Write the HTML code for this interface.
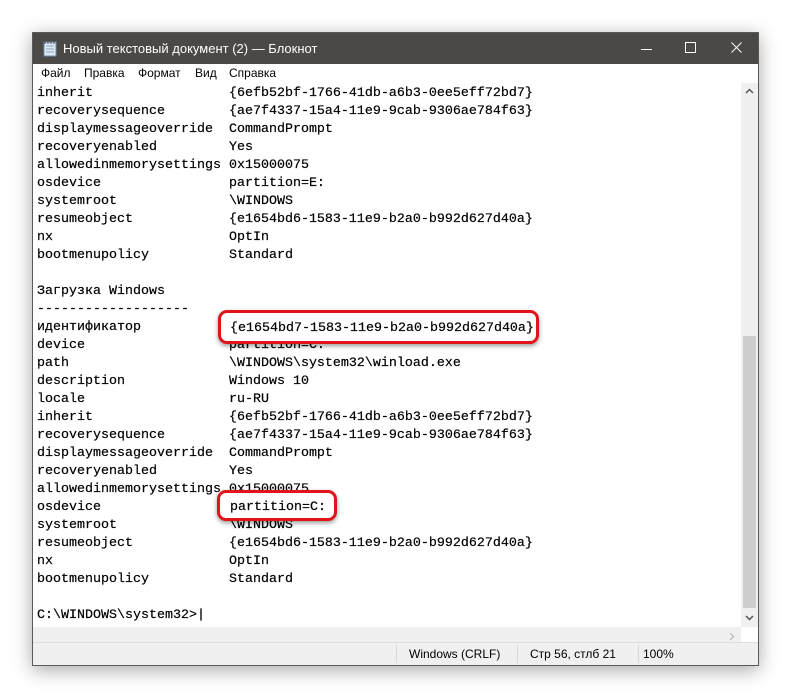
<!DOCTYPE html>
<html><head><meta charset="utf-8"><style>
body{margin:0;width:792px;height:699px;background:#fff;position:relative;overflow:hidden;font-family:"Liberation Sans",sans-serif}
.win{position:absolute;left:32px;top:32px;width:727px;height:634px;background:#fff;border:1px solid #5a5a5a;box-sizing:border-box;box-shadow:0 4px 18px rgba(0,0,0,.35)}
.title{position:absolute;left:0;top:0;right:0;height:31px;background:#4b4946;color:#fff;font-size:13px;line-height:31px}
.title span{position:absolute;left:30px}
.menu{position:absolute;left:0;top:31px;right:0;height:19px;font-size:12px;line-height:19px;color:#000}
.menu span{position:absolute}
pre{position:absolute;left:4px;top:52px;margin:0;font-family:"Liberation Mono",monospace;font-size:13.33px;line-height:18px;color:#000;-webkit-text-stroke:0.2px #000}
.vs{position:absolute;right:0;top:50px;width:17px;height:544px;background:#f0f0f0}
.thumb{position:absolute;left:2px;width:13px;top:253px;height:272px;background:#cdcdcd}
.hs{position:absolute;left:0;right:17px;top:594px;height:18px;background:#f0f0f0}
.status{position:absolute;left:0;right:0;bottom:0;height:22px;background:#f0f0f0;border-top:1px solid #ddd;font-size:12px;line-height:22px;color:#000}
.status span{position:absolute}
.sep{position:absolute;top:2px;width:1px;height:18px;background:#d8d8d8}
.box{position:absolute;border:3px solid #e0141b;border-radius:9px;background:#fff;box-shadow:0 2px 5px rgba(0,0,0,.4),inset 0 0 0 1px #fff;font-family:"Liberation Mono",monospace;font-size:13.33px;line-height:18px;color:#000;-webkit-text-stroke:0.2px #000;box-sizing:border-box}
</style></head><body>
<div class="win">
<div class="title">
<svg style="position:absolute;left:9px;top:7px" width="16" height="17"><rect x="2" y="2" width="12" height="14" fill="#dfe9f5" stroke="#6f8aa8"/><path d="M4 6h8M4 9h8M4 12h8" stroke="#8aa2bf"/><path d="M3 1v3M6 1v3M9 1v3M12 1v3" stroke="#444"/></svg>
<span>Новый текстовый документ (2) — Блокнот</span>
<svg style="position:absolute;left:608px;top:10px" width="12" height="12"><path d="M0 6.5h11" stroke="#fff"/></svg>
<svg style="position:absolute;left:652px;top:9px" width="12" height="12"><rect x="0.5" y="0.5" width="10" height="10" fill="none" stroke="#fff"/></svg>
<svg style="position:absolute;left:698px;top:9px" width="12" height="12"><path d="M0.5 0.5l10 10M10.5 0.5l-10 10" stroke="#fff"/></svg>
</div>
<div class="menu"><span style="left:8px">Файл</span><span style="left:51px">Правка</span><span style="left:105px">Формат</span><span style="left:162px">Вид</span><span style="left:196px">Справка</span></div>
<pre>inherit                 {6efb52bf-1766-41db-a6b3-0ee5eff72bd7}
recoverysequence        {ae7f4337-15a4-11e9-9cab-9306ae784f63}
displaymessageoverride  CommandPrompt
recoveryenabled         Yes
allowedinmemorysettings 0x15000075
osdevice                partition=E:
systemroot              \WINDOWS
resumeobject            {e1654bd6-1583-11e9-b2a0-b992d627d40a}
nx                      OptIn
bootmenupolicy          Standard

Загрузка Windows
-------------------
идентификатор           {e1654bd7-1583-11e9-b2a0-b992d627d40a}
device                  partition=C:
path                    \WINDOWS\system32\winload.exe
description             Windows 10
locale                  ru-RU
inherit                 {6efb52bf-1766-41db-a6b3-0ee5eff72bd7}
recoverysequence        {ae7f4337-15a4-11e9-9cab-9306ae784f63}
displaymessageoverride  CommandPrompt
recoveryenabled         Yes
allowedinmemorysettings 0x15000075
osdevice                partition=C:
systemroot              \WINDOWS
resumeobject            {e1654bd6-1583-11e9-b2a0-b992d627d40a}
nx                      OptIn
bootmenupolicy          Standard

C:\WINDOWS\system32>|</pre>
<div class="vs"><div class="thumb"></div>
<svg style="position:absolute;left:4px;top:5px" width="9" height="6"><path d="M1 5l3.5-3.5L8 5" stroke="#555" stroke-width="1.5" fill="none"/></svg>
<svg style="position:absolute;left:4px;top:532px" width="9" height="6"><path d="M1 1l3.5 3.5L8 1" stroke="#555" stroke-width="1.5" fill="none"/></svg>
</div>
<div class="hs"><svg style="position:absolute;right:6px;top:5px" width="6" height="9"><path d="M1 1l3.5 3.5L1 8" stroke="#bbb" stroke-width="1.3" fill="none"/></svg></div>
<div class="status">
<div class="sep" style="left:363px"></div><div class="sep" style="left:484px"></div><div class="sep" style="left:605px"></div>
<span style="left:376px">Windows (CRLF)</span><span style="left:497px">Стр 56, стлб 21</span><span style="left:610px">100%</span>
</div>
</div>
<div class="box" style="left:218px;top:310px;width:321px;height:34px;padding:7px 0 0 9px">{e1654bd7-1583-11e9-b2a0-b992d627d40a}</div>
<div class="box" style="left:217px;top:490px;width:120px;height:31px;padding:6px 0 0 10px">partition=C:</div>
</body></html>
